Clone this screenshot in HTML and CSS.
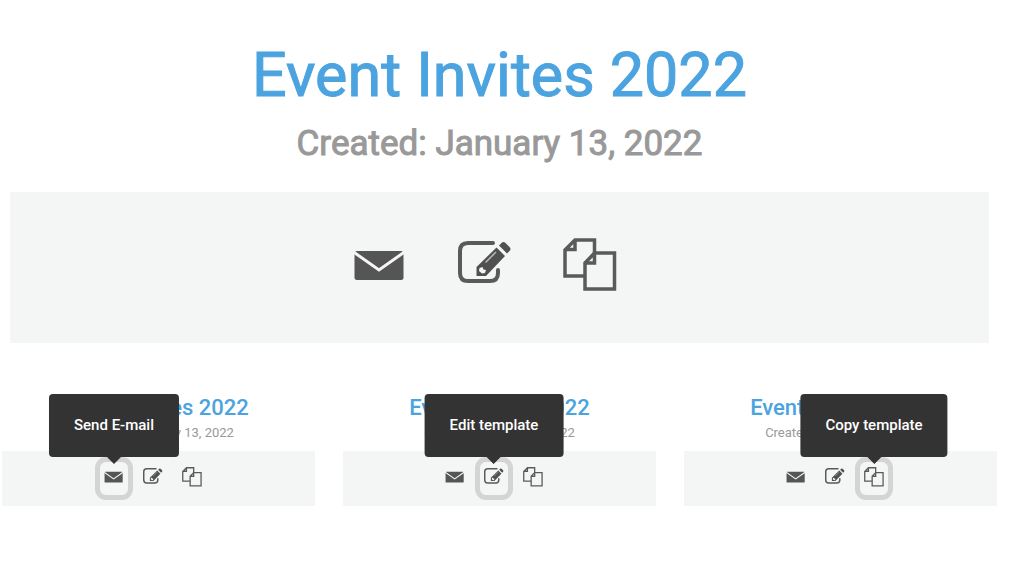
FILE: index.html
```html
<!DOCTYPE html>
<html lang="en">
<head>
<meta charset="utf-8">
<title>Event Invites 2022</title>
<link rel="stylesheet" href="styles.css">
</head>
<body>
<svg class="sprite" aria-hidden="true">
  <symbol id="mail" viewBox="0 0 54 54">
    <rect x="1.500" y="13" width="49" height="29" rx="2.500" fill="#555"/>
    <path d="M0.500 14L26 32L51.500 14" fill="none" stroke="#f4f6f6" stroke-width="3"/>
  </symbol>
  <symbol id="edit" viewBox="0 0 54 54">
    <path d="M35 5H10Q2 5 2 13V35Q2 43 10 43H32Q40 43 40 35V32" fill="none" stroke="#5a5a5a" stroke-width="4" stroke-linecap="round"/>
    <path d="M18.500 38V29L38.500 9.500L47 18L28 38Z" fill="#505050"/>
    <path d="M41 7.500L43.500 5Q45.500 3 47.500 5L51.500 9Q53.500 11 51.500 13L49 15.500Z" fill="#505050"/>
    <path d="M27.500 24.500L38 14" stroke="#b5b6b6" stroke-width="1.500"/>
    <path d="M21.500 30L24.500 29L25.500 31.500L28 32L27 35L24 35.500L21 33Z" fill="#f4f6f6"/>
  </symbol>
  <symbol id="copy" viewBox="0 0 54 54">
    <g fill="none" stroke="#5a5a5a" stroke-width="3.500">
      <path d="M31.500 15V2H12L2 12V38H22M12 2V11.500H2"/>
      <path d="M31.500 15H51.500V51H22V25ZM31.500 15V25H22"/>
    </g>
  </symbol>
</svg>
<main class="page">
  <section class="feature">
    <h1 class="feature-title">Event Invites 2022</h1>
    <p class="feature-date">Created: January 13, 2022</p>
    <div class="feature-bar">
      <button class="action" aria-label="Send E-mail"><svg><use href="#mail"/></svg></button>
      <button class="action" aria-label="Edit template"><svg><use href="#edit"/></svg></button>
      <button class="action" aria-label="Copy template"><svg><use href="#copy"/></svg></button>
    </div>
  </section>
  <div class="cards">
    <section class="card">
      <h2 class="card-title">Event Invites 2022</h2>
      <p class="card-date">Created: January 13, 2022</p>
      <div class="card-bar">
        <button class="action small active" aria-label="Send E-mail"><svg><use href="#mail"/></svg><span class="tip">Send E-mail</span></button>
        <button class="action small" aria-label="Edit template"><svg><use href="#edit"/></svg></button>
        <button class="action small" aria-label="Copy template"><svg><use href="#copy"/></svg></button>
      </div>
    </section>
    <section class="card">
      <h2 class="card-title">Event Invites 2022</h2>
      <p class="card-date">Created: January 13, 2022</p>
      <div class="card-bar">
        <button class="action small" aria-label="Send E-mail"><svg><use href="#mail"/></svg></button>
        <button class="action small active" aria-label="Edit template"><svg><use href="#edit"/></svg><span class="tip">Edit template</span></button>
        <button class="action small" aria-label="Copy template"><svg><use href="#copy"/></svg></button>
      </div>
    </section>
    <section class="card">
      <h2 class="card-title">Event Invites 2022</h2>
      <p class="card-date">Created: January 13, 2022</p>
      <div class="card-bar">
        <button class="action small" aria-label="Send E-mail"><svg><use href="#mail"/></svg></button>
        <button class="action small" aria-label="Edit template"><svg><use href="#edit"/></svg></button>
        <button class="action small active" aria-label="Copy template"><svg><use href="#copy"/></svg><span class="tip">Copy template</span></button>
      </div>
    </section>
  </div>
</main>
</body>
</html>
```
FILE: styles.css
```css
* { box-sizing: border-box; }
body {
  margin: 0;
  background: #fff;
  font-family: Roboto, "Liberation Sans", sans-serif;
}
.sprite { display: none; }
.page { padding: 40px 27px 0 2px; }
.feature { margin: 0 8px; text-align: center; }
.feature-title {
  margin: 0;
  font-size: 61px;
  line-height: 70px;
  font-weight: 400;
  color: #4ba3df;
  -webkit-text-stroke: 1px #4ba3df;
}
.feature-date {
  margin: 13px 0 27px;
  font-size: 35px;
  line-height: 42px;
  color: #999;
  -webkit-text-stroke: 1px #999;
}
.feature-bar {
  display: flex;
  justify-content: center;
  gap: 51px;
  padding: 46px 30px 51px 0;
  background: #f4f6f6;
}
.action {
  display: block;
  padding: 0;
  border: 0;
  background: none;
  font: inherit;
  cursor: pointer;
}
.action svg { display: block; width: 54px; height: 54px; }
.cards {
  display: grid;
  grid-template-columns: repeat(3, 1fr);
  gap: 28px;
  margin-top: 50px;
}
.card { text-align: center; }
.card-title {
  margin: 0;
  font-size: 22px;
  line-height: 30px;
  font-weight: 500;
  color: #4ba3df;
}
.card-date {
  margin: 2px 0 10px;
  font-size: 13px;
  line-height: 16px;
  color: #999;
}
.card-bar {
  display: flex;
  justify-content: center;
  gap: 1px;
  padding: 6px 11px 6px 0;
  background: #f4f6f6;
}
.small {
  position: relative;
  width: 38px;
  height: 43px;
  padding: 5px 4px 8px;
  border: 5px solid transparent;
  border-radius: 11px;
}
.small svg { width: 20px; height: 20px; }
.active { border-color: #d3d5d4; }
.tip {
  position: absolute;
  left: 50%;
  bottom: 100%;
  margin-bottom: 5px;
  transform: translateX(-50%);
  padding: 20px 25px 21px;
  border-radius: 4px;
  background: #333;
  color: #fff;
  font-size: 15px;
  font-weight: 500;
  line-height: 22px;
  white-space: nowrap;
}
.tip::after {
  content: "";
  position: absolute;
  left: 50%;
  top: 100%;
  margin-left: -7px;
  border: 7px solid transparent;
  border-top-color: #333;
  border-bottom: 0;
}
```
